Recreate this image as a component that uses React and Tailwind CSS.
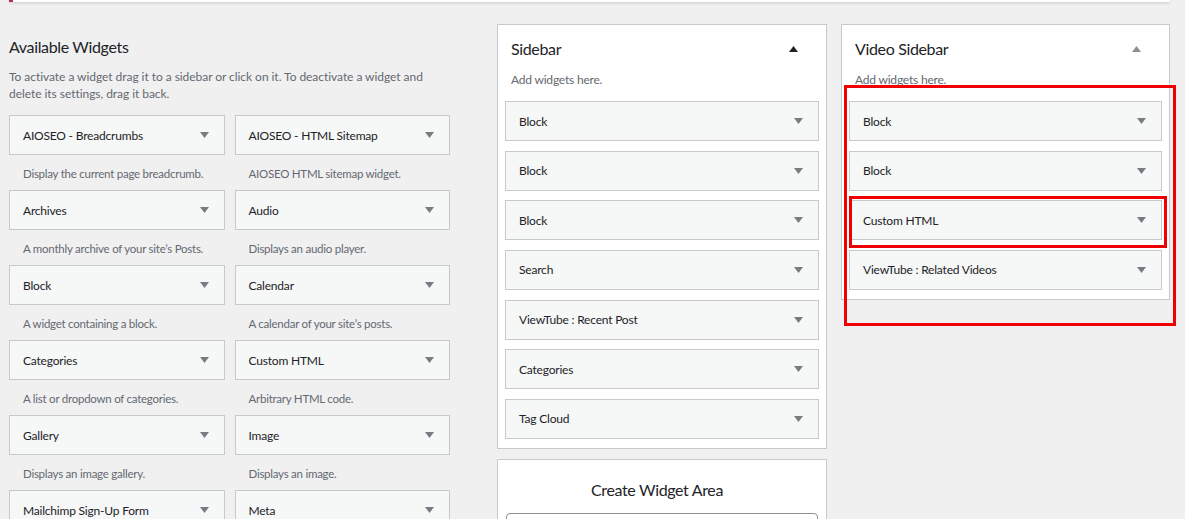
import React from "react";

const FONT = "font-['Lato','Noto_Sans',sans-serif]";

const available = [
  ["AIOSEO - Breadcrumbs", "Display the current page breadcrumb."],
  ["AIOSEO - HTML Sitemap", "AIOSEO HTML sitemap widget."],
  ["Archives", "A monthly archive of your site’s Posts."],
  ["Audio", "Displays an audio player."],
  ["Block", "A widget containing a block."],
  ["Calendar", "A calendar of your site’s posts."],
  ["Categories", "A list or dropdown of categories."],
  ["Custom HTML", "Arbitrary HTML code."],
  ["Gallery", "Displays an image gallery."],
  ["Image", "Displays an image."],
  ["Mailchimp Sign-Up Form", "Sign up form."],
  ["Meta", "Login, RSS, & WordPress.org links."],
];

const sidebar = ["Block", "Block", "Block", "Search", "ViewTube : Recent Post", "Categories", "Tag Cloud"];
const videoSidebar = ["Block", "Block", "Custom HTML", "ViewTube : Related Videos"];

const Arrow = ({ up = false, className = "" }) => (
  <svg width="9" height="6" viewBox="0 0 9 6" className={className}>
    {up ? <path d="M0 6 L4.5 0 L9 6 Z" fill="currentColor" /> : <path d="M0 0 L9 0 L4.5 6 Z" fill="currentColor" />}
  </svg>
);

const Widget = ({ title }) => (
  <div className="h-[40px] shrink-0 flex items-center justify-between bg-[#f6f7f7] border border-[#c8c9cc] pl-[13px] pr-[15px]">
    <span className="text-[12px] tracking-[-0.2px] text-[#1d2327] leading-[17px]">{title}</span>
    <Arrow className="text-[#787c82]" />
  </div>
);

const SidebarPanel = ({ title, items, arrowClass, pb }) => (
  <div className={`bg-white border border-[#c8c9cc] px-[7px] pt-[14px] ${pb}`}>
    <div className="flex items-center justify-between pl-[6px] pr-[21px]">
      <h2 className="text-[16px] tracking-[-0.35px] leading-[20px] text-[#1d2327]">{title}</h2>
      <Arrow up className={arrowClass} />
    </div>
    <p className="pl-[6px] mt-[11.5px] text-[12px] tracking-[-0.2px] leading-[17px] text-[#646970]">Add widgets here.</p>
    <div className="mt-[13.5px] flex flex-col gap-[9.67px]">
      {items.map((t, i) => (
        <Widget key={i} title={t} />
      ))}
    </div>
  </div>
);

export default function App() {
  return (
    <div className={`relative w-[1185px] h-[519px] overflow-hidden bg-[#f0f0f1] ${FONT}`}>
      {/* bottom edge of a notice */}
      <div className="ml-[9px] w-[1161px] h-[2px] bg-white border-l-4 border-[#b32d5e] shadow-[0_1px_3px_rgba(0,0,0,0.18)]" />

      <div className="flex items-start mt-[22px] pl-[9px]">
        {/* Available widgets */}
        <div className="w-[441px] shrink-0">
          <h2 className="mt-[13px] text-[16px] tracking-[-0.35px] leading-[20px] text-[#1d2327]">Available Widgets</h2>
          <p className="mt-[10.5px] text-[12px] tracking-[-0.05px] leading-[17px] text-[#646970] whitespace-nowrap">
            To activate a widget drag it to a sidebar or click on it. To deactivate a widget and
            <br />
            delete its settings, drag it back.
          </p>
          <div className="mt-[13.5px] grid grid-cols-2 gap-x-[10px]">
            {available.map(([t, d]) => (
              <div key={t} className="h-[75px]">
                <Widget title={t} />
                <p className="pl-[14px] pt-[9.5px] text-[11.5px] tracking-[-0.25px] leading-[17px] text-[#646970] whitespace-nowrap">{d}</p>
              </div>
            ))}
          </div>
        </div>

        {/* Sidebars */}
        <div className="ml-[47px] w-[330px] shrink-0">
          <SidebarPanel title="Sidebar" items={sidebar} arrowClass="text-[#1d2327]" pb="pb-[8.6px]" />
          <div className="mt-[10px] bg-white border border-[#c8c9cc] pt-[20px] px-[8px] h-[100px]">
            <h3 className="text-center pr-[10px] text-[16px] tracking-[-0.35px] leading-[20px] text-[#1d2327]">Create Widget Area</h3>
            <div className="mt-[13px] h-[30px] border border-[#8c8f94] rounded-[4px] bg-white" />
          </div>
        </div>

        <div className="ml-[14px] w-[329px] shrink-0">
          <SidebarPanel title="Video Sidebar" items={videoSidebar} arrowClass="text-[#8c8f94]" pb="pb-[9px]" />
        </div>
      </div>

      {/* annotation boxes */}
      <div className="absolute left-[844px] top-[85px] w-[332px] h-[241px] border-[3px] border-[#f00000]" />
      <div className="absolute left-[849px] top-[195.5px] w-[318px] h-[52px] border-[3px] border-[#f00000]" />
    </div>
  );
}
